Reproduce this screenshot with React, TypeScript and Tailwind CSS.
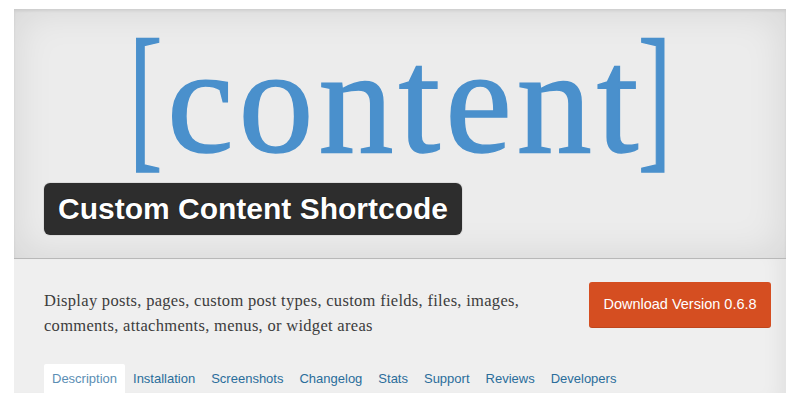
import React from "react";

const tabs = ["Description", "Installation", "Screenshots", "Changelog", "Stats", "Support", "Reviews", "Developers"];

export default function App() {
  return (
    <div className="w-[800px] h-[400px] bg-white pl-[14px] pt-[9px] overflow-hidden">
      <div className="w-[772px] flex flex-col">
        <div className="h-[249px] bg-[#ececec] shadow-[inset_0_0_40px_rgba(0,0,0,0.10),inset_0_2px_3px_rgba(0,0,0,0.08)] flex flex-col">
          <div
            className="pl-[115px] pt-[6px] h-[174px] text-[150px] leading-[160px] text-[#4a90cc] whitespace-nowrap [-webkit-text-stroke:1.5px_#4a90cc]"
            style={{ fontFamily: '"Liberation Serif", serif' }}
          >
            <span className="inline-block text-[162px] leading-none align-[2px] mr-[-16px] scale-x-[0.62] origin-left">[</span>
            <span className="tracking-[5px]">conten</span>
            <span>t</span>
            <span className="inline-block text-[162px] leading-none align-[2px] scale-x-[0.62] origin-left">]</span>
          </div>
          <div className="pl-[30px]">
            <div
              className="inline-flex items-center h-[52px] px-[14px] rounded-[6px] bg-[#2d2d2d] text-white font-bold text-[30px] leading-none ring-1 ring-[#dcdcdc] [text-shadow:0_0_1px_#000]"
              style={{ fontFamily: '"Liberation Sans", Arial, sans-serif' }}
            >
              Custom Content Shortcode
            </div>
          </div>
        </div>
        <div className="h-[1px] bg-[#b8b8b8]" />
        <div className="h-[134px] bg-[#efefef] shadow-[inset_-20px_0_20px_-14px_rgba(0,0,0,0.06)] flex flex-col pl-[30px] pr-[15px]">
          <div className="flex justify-between pt-[23px] h-[105px]">
            <p
              className="text-[16.5px] tracking-[0.3px] leading-[25px] text-[#3c3c3c] w-[492px] pt-[6px]"
              style={{ fontFamily: '"Liberation Serif", Georgia, serif' }}
            >
              Display posts, pages, custom post types, custom fields, files, images, comments, attachments, menus, or widget areas
            </p>
            <div
              className="h-[46px] w-[182px] bg-[#d54e21] rounded-[3px] text-white text-[14.5px] flex items-center justify-center shadow-[inset_0_-1px_0_rgba(0,0,0,0.1)]"
              style={{ fontFamily: '"Liberation Sans", Arial, sans-serif' }}
            >
              Download Version 0.6.8
            </div>
          </div>
          <div className="flex h-[29px] items-stretch" style={{ fontFamily: '"Liberation Sans", Arial, sans-serif' }}>
            {tabs.map((t, i) => (
              <div
                key={t}
                className={
                  i === 0
                    ? "bg-white px-[8px] flex items-center text-[13px] text-[#5b8eb4] rounded-t-[2px]"
                    : "px-[8px] flex items-center text-[13px] text-[#2a6d9b]"
                }
              >
                {t}
              </div>
            ))}
          </div>
        </div>
      </div>
    </div>
  );
}
